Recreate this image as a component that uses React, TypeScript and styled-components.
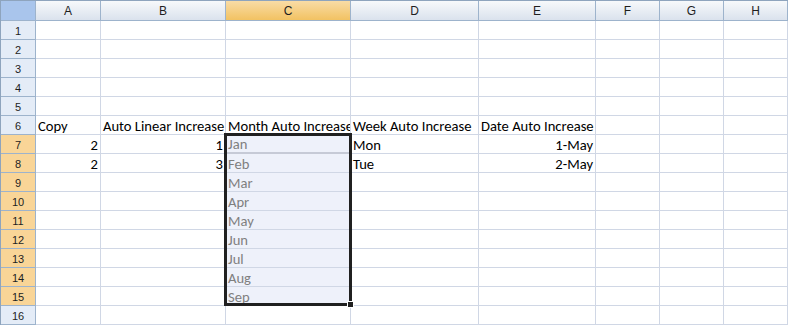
import * as React from 'react'
import styled, {createGlobalStyle, css} from 'styled-components'

const GlobalStyle = createGlobalStyle`
	html, body { margin: 0; padding: 0; background: #ffffff; }
	body { font-family: "Liberation Sans", Arial, sans-serif; }
`;

const COLS = ['A', 'B', 'C', 'D', 'E', 'F', 'G', 'H'];
const WIDTHS = [35, 65, 125, 125, 128, 117, 64, 64, 64];
const ROWS = 16;
const HEAD_H = 20;
const ROW_H = 19;
const ACTIVE_COL = 'C';
const SEL_ROWS = [7, 15];

type CellData = {text: string, align?: 'left' | 'right', faded?: boolean, split?: boolean};

const data: Record<string, CellData> = {
	A6: {text: 'Copy'},
	B6: {text: 'Auto Linear Increase'},
	C6: {text: 'Month Auto Increase'},
	D6: {text: 'Week Auto Increase'},
	E6: {text: 'Date Auto Increase'},
	A7: {text: '2', align: 'right'},
	B7: {text: '1', align: 'right'},
	C7: {text: 'Jan', faded: true, split: true},
	D7: {text: 'Mon'},
	E7: {text: '1-May', align: 'right'},
	A8: {text: '2', align: 'right'},
	B8: {text: '3', align: 'right'},
	C8: {text: 'Feb', faded: true},
	D8: {text: 'Tue'},
	E8: {text: '2-May', align: 'right'},
	C9: {text: 'Mar', faded: true},
	C10: {text: 'Apr', faded: true},
	C11: {text: 'May', faded: true},
	C12: {text: 'Jun', faded: true},
	C13: {text: 'Jul', faded: true},
	C14: {text: 'Aug', faded: true},
	C15: {text: 'Sep', faded: true},
};

const Sheet = styled.div`
	position: relative;
	display: grid;
	grid-template-columns: ${WIDTHS.map(w => w + 'px').join(' ')};
	grid-template-rows: ${HEAD_H}px repeat(${ROWS}, ${ROW_H}px);
	width: 788px;
	height: 325px;
	box-sizing: border-box;
	border-top: 1px solid #8ea4bd;
	border-left: 1px solid #8ea4bd;
	overflow: hidden;
	background: #ffffff;
`;

const headFont = css`
	font-family: "Liberation Sans", Arial, sans-serif;
	font-size: 11px;
	color: #1e1e1e;
	box-sizing: border-box;
	border-right: 1px solid #9db3cc;
	border-bottom: 1px solid #9db3cc;
	display: flex;
	align-items: center;
	justify-content: center;
`;

const Corner = styled.div`
	${headFont}
	background: #a9c5ec;
`;

const ColHeader = styled.div<{$active?: boolean}>`
	${headFont}
	font-size: 12px;
	padding-top: 1px;
	background: ${p => p.$active
		? 'linear-gradient(#f9dca6, #f2c262)'
		: 'linear-gradient(#f7f9fb, #dae2ed)'};
`;

const RowHeader = styled.div<{$active?: boolean}>`
	${headFont}
	padding-top: 1px;
	background: ${p => p.$active ? '#f9d597' : '#e4ecf7'};
`;

const Cell = styled.div<{$align?: string, $selected?: boolean, $faded?: boolean, $split?: boolean}>`
	box-sizing: border-box;
	border-right: 1px solid #d0d7e5;
	border-bottom: ${p => p.$split ? '2px solid #c6cad6' : '1px solid #d0d7e5'};
	background: ${p => p.$selected ? '#eef1fa' : '#ffffff'};
	color: ${p => p.$faded ? '#7f7f7f' : '#000000'};
	font-family: "Carlito", "Lato", "Liberation Sans", sans-serif;
	font-size: 14.6px;
	line-height: 15px;
	white-space: nowrap;
	overflow: hidden;
	display: flex;
	align-items: flex-end;
	justify-content: ${p => p.$align === 'right' ? 'flex-end' : 'flex-start'};
	padding: 0 2px 0 2px;
`;

const Selection = styled.div`
	position: absolute;
	box-sizing: border-box;
	border: 3px solid #202020;
	pointer-events: none;
`;

const FillHandle = styled.div`
	position: absolute;
	right: -5px;
	bottom: -5px;
	width: 5px;
	height: 5px;
	background: #202020;
	border: 1px solid #ffffff;
`;

const colLeft = (i: number) => WIDTHS.slice(0, i + 1).reduce((a, b) => a + b, 0);

export default function App() {
	const activeIdx = COLS.indexOf(ACTIVE_COL);
	const selLeft = colLeft(activeIdx) - 2;
	const selTop = HEAD_H + (SEL_ROWS[0] - 1) * ROW_H - 2;
	const selW = WIDTHS[activeIdx + 1] + 3;
	const selH = (SEL_ROWS[1] - SEL_ROWS[0] + 1) * ROW_H + 2;

	const rows = [];
	for (let r = 1; r <= ROWS; r++) {
		const inSel = r >= SEL_ROWS[0] && r <= SEL_ROWS[1];
		rows.push(<RowHeader key={'h' + r} $active={inSel}>{r}</RowHeader>);
		COLS.forEach(c => {
			const d = data[c + r];
			const sel = inSel && c === ACTIVE_COL;
			rows.push(
				<Cell key={c + r} $align={d?.align} $selected={sel} $faded={d?.faded} $split={d?.split}>
					{d?.text}
				</Cell>
			);
		});
	}

	return (
		<>
			<GlobalStyle />
			<Sheet>
				<Corner />
				{COLS.map(c => <ColHeader key={c} $active={c === ACTIVE_COL}>{c}</ColHeader>)}
				{rows}
				<Selection style={{left: selLeft, top: selTop, width: selW, height: selH}}>
					<FillHandle />
				</Selection>
			</Sheet>
		</>
	)
}
